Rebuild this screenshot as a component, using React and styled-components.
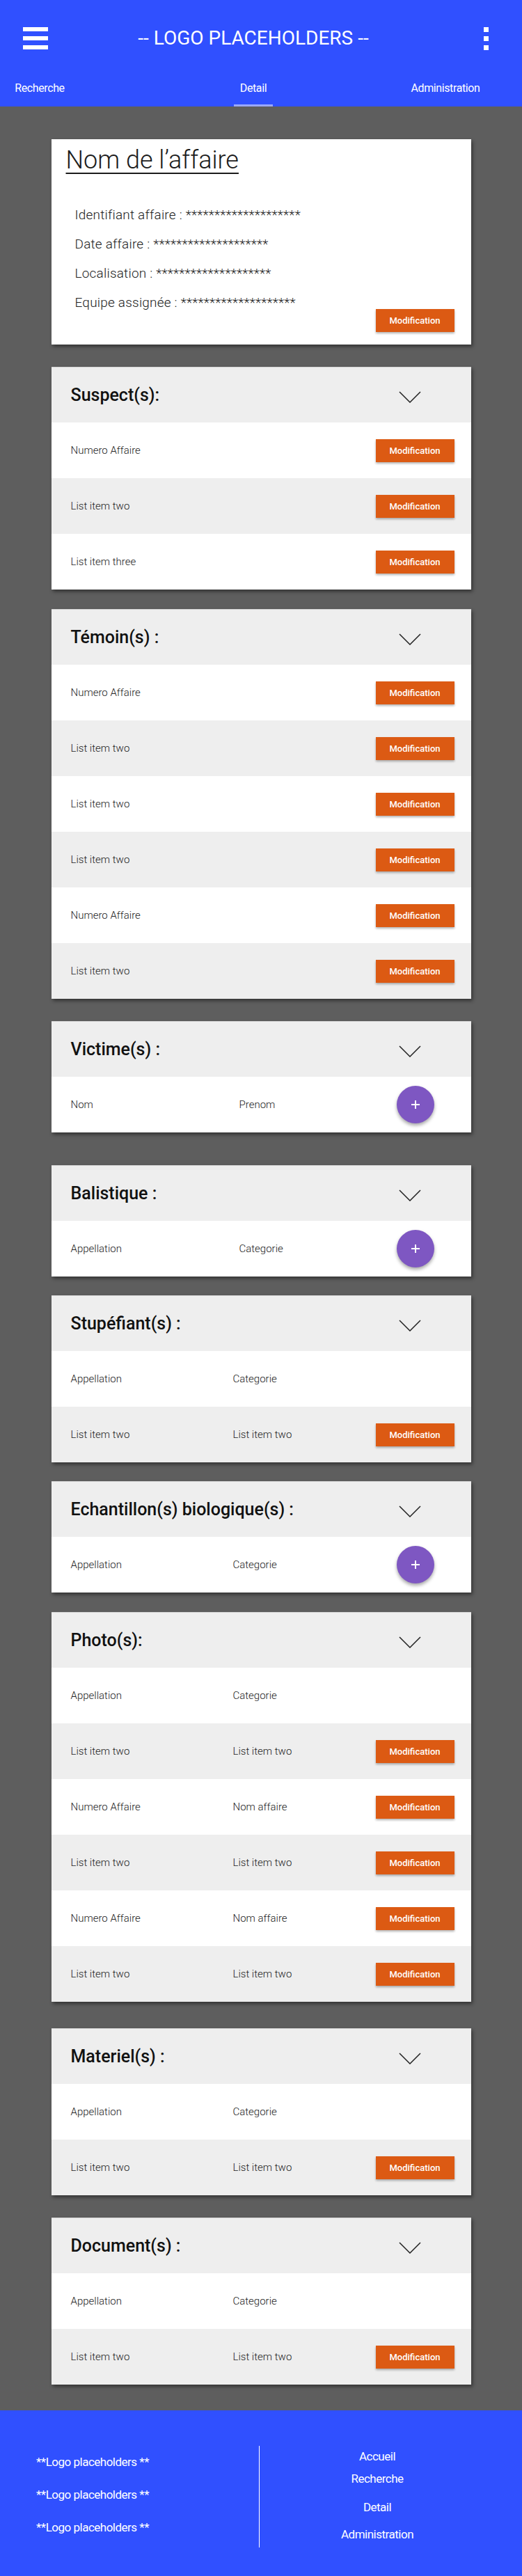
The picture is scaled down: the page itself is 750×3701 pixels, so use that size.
import React from "react";
import styled, { createGlobalStyle } from "styled-components";

const GlobalStyle = createGlobalStyle`
  * { box-sizing: border-box; }
  body {
    margin: 0;
    background: #5e5e5e;
    font-family: Roboto, "Noto Sans", sans-serif;
    color: #222;
  }
`;

const sections = [
  {
    title: "Suspect(s):",
    gap: 32,
    rows: [
      { a: "Numero Affaire", action: "btn" },
      { a: "List item two", action: "btn" },
      { a: "List item three", action: "btn" },
    ],
  },
  {
    title: "Témoin(s) :",
    gap: 28,
    rows: [
      { a: "Numero Affaire", action: "btn" },
      { a: "List item two", action: "btn" },
      { a: "List item two", action: "btn" },
      { a: "List item two", action: "btn" },
      { a: "Numero Affaire", action: "btn" },
      { a: "List item two", action: "btn" },
    ],
  },
  {
    title: "Victime(s) :",
    gap: 32,
    split: 242,
    rows: [{ a: "Nom", b: "Prenom", action: "fab" }],
  },
  {
    title: "Balistique :",
    gap: 47,
    split: 242,
    rows: [{ a: "Appellation", b: "Categorie", action: "fab" }],
  },
  {
    title: "Stupéfiant(s) :",
    gap: 27,
    rows: [
      { a: "Appellation", b: "Categorie" },
      { a: "List item two", b: "List item two", action: "btn" },
    ],
  },
  {
    title: "Echantillon(s) biologique(s) :",
    gap: 27,
    rows: [{ a: "Appellation", b: "Categorie", action: "fab" }],
  },
  {
    title: "Photo(s):",
    gap: 28,
    rows: [
      { a: "Appellation", b: "Categorie" },
      { a: "List item two", b: "List item two", action: "btn" },
      { a: "Numero Affaire", b: "Nom affaire", action: "btn" },
      { a: "List item two", b: "List item two", action: "btn" },
      { a: "Numero Affaire", b: "Nom affaire", action: "btn" },
      { a: "List item two", b: "List item two", action: "btn" },
    ],
  },
  {
    title: "Materiel(s) :",
    gap: 38,
    rows: [
      { a: "Appellation", b: "Categorie" },
      { a: "List item two", b: "List item two", action: "btn" },
    ],
  },
  {
    title: "Document(s) :",
    gap: 32,
    rows: [
      { a: "Appellation", b: "Categorie" },
      { a: "List item two", b: "List item two", action: "btn" },
    ],
  },
];

function Chevron() {
  return (
    <svg width="32" height="17" viewBox="0 0 32 17">
      <polyline points="1,1 16,16 31,1" fill="none" stroke="#222" strokeWidth="1.5" />
    </svg>
  );
}

function Section({ data }) {
  return (
    <Card $gap={data.gap}>
      <SectionHeader>
        <SectionTitle>{data.title}</SectionTitle>
        <ChevronBox>
          <Chevron />
        </ChevronBox>
      </SectionHeader>
      {data.rows.map((row, i) => (
        <Row key={i} $split={data.split || 233}>
          <Cell>{row.a}</Cell>
          <Cell>{row.b}</Cell>
          {row.action === "btn" && <ModButton>Modification</ModButton>}
          {row.action === "fab" && (
            <Fab>
              <svg width="16" height="16" viewBox="0 0 16 16">
                <path d="M8 2v12M2 8h12" stroke="#fff" strokeWidth="2" />
              </svg>
            </Fab>
          )}
        </Row>
      ))}
    </Card>
  );
}

export default function App() {
  return (
    <Page>
      <GlobalStyle />
      <Header>
        <Toolbar>
          <Burger>
            <span />
            <span />
            <span />
          </Burger>
          <Logo>-- LOGO PLACEHOLDERS --</Logo>
          <Kebab>
            <span />
            <span />
            <span />
          </Kebab>
        </Toolbar>
        <TabBar>
          <Tab $w={114}>Recherche</Tab>
          <Tab $w={100} $ml={200} $active>
            Detail
          </Tab>
          <Tab $w={200} $ml={126}>
            Administration
          </Tab>
        </TabBar>
      </Header>

      <InfoCard $gap={47}>
        <CaseTitle>Nom de l’affaire</CaseTitle>
        <InfoBody>
          <InfoList>
            <InfoLine>Identifiant affaire : ********************</InfoLine>
            <InfoLine>Date affaire : ********************</InfoLine>
            <InfoLine>Localisation : ********************</InfoLine>
            <InfoLine>Equipe assignée : ********************</InfoLine>
          </InfoList>
          <ModButton>Modification</ModButton>
        </InfoBody>
      </InfoCard>

      {sections.map((s) => (
        <Section key={s.title} data={s} />
      ))}

      <Footer>
        <FooterLogos>
          <FooterText>**Logo placeholders **</FooterText>
          <FooterText>**Logo placeholders **</FooterText>
          <FooterText>**Logo placeholders **</FooterText>
        </FooterLogos>
        <FooterLinks>
          <FooterText $mt={5}>Accueil</FooterText>
          <FooterText $mt={12}>Recherche</FooterText>
          <FooterText $mt={21}>Detail</FooterText>
          <FooterText $mt={19}>Administration</FooterText>
        </FooterLinks>
      </Footer>
    </Page>
  );
}

const Page = styled.div`
  width: 750px;
  display: flex;
  flex-direction: column;
`;

const Header = styled.header`
  background: #3050ff;
  height: 153px;
  color: #fff;
  display: flex;
  flex-direction: column;
`;

const Toolbar = styled.div`
  height: 110px;
  display: flex;
  align-items: center;
  padding: 0 48px 0 33px;
`;

const Burger = styled.div`
  width: 36px;
  display: flex;
  flex-direction: column;
  gap: 7px;
  span {
    display: block;
    height: 6px;
    background: #fff;
  }
`;

const Logo = styled.div`
  flex: 1;
  text-align: center;
  padding-right: 36px;
  font-size: 28px;
  letter-spacing: 0;
  line-height: 32px;
`;

const Kebab = styled.div`
  width: 7px;
  display: flex;
  flex-direction: column;
  gap: 6px;
  span {
    display: block;
    height: 7px;
    background: #fff;
  }
`;

const TabBar = styled.nav`
  height: 43px;
  display: flex;
`;

const Tab = styled.div`
  position: relative;
  width: ${(p) => p.$w}px;
  margin-left: ${(p) => p.$ml || 0}px;
  padding-top: 7px;
  text-align: center;
  font-size: 16px;
  line-height: 20px;
  letter-spacing: -0.4px;
  &::after {
    content: "";
    display: ${(p) => (p.$active ? "block" : "none")};
    position: absolute;
    bottom: 0;
    left: 50%;
    width: 56px;
    margin-left: -28px;
    height: 3px;
    background: #9aa8ff;
  }
`;

const Card = styled.section`
  width: 603px;
  margin: ${(p) => p.$gap}px auto 0;
  background: #fff;
  box-shadow: 2px 3px 5px rgba(0, 0, 0, 0.45);
`;

const InfoCard = styled(Card)`
  padding: 10px 24px 18px 21px;
`;

const CaseTitle = styled.h1`
  margin: 0;
  font-size: 36px;
  font-weight: 300;
  line-height: 40px;
  color: #1c1c1c;
  text-decoration: underline;
  text-decoration-thickness: 1.5px;
  text-underline-offset: 6px;
`;

const InfoBody = styled.div`
  margin-top: 38px;
  display: grid;
  grid-template-columns: 1fr auto;
  align-items: end;
`;

const InfoList = styled.div`
  padding: 0 0 21px 13px;
  display: flex;
  flex-direction: column;
`;

const InfoLine = styled.div`
  font-size: 19px;
  font-weight: 300;
  line-height: 42px;
  letter-spacing: 0.2px;
  color: #222;
`;

const ModButton = styled.button`
  justify-self: end;
  width: 113px;
  height: 33px;
  border: none;
  border-radius: 0;
  background: #dc5a13;
  color: #fff;
  font-family: Roboto, sans-serif;
  font-size: 13px;
  font-weight: 500;
  box-shadow: 0 2px 3px rgba(0, 0, 0, 0.3);
  padding: 0;
`;

const SectionHeader = styled.div`
  height: 80px;
  background: #eeeeee;
  border-top: 1px solid #d4d4d4;
  display: flex;
  align-items: center;
  justify-content: space-between;
  padding: 0 72px 0 28px;
`;

const SectionTitle = styled.h2`
  margin: 0;
  font-size: 25px;
  font-weight: 500;
  color: #111;
`;

const ChevronBox = styled.div`
  display: flex;
  margin-top: 6px;
`;

const Row = styled.div`
  height: 80px;
  display: grid;
  grid-template-columns: ${(p) => p.$split}px 1fr auto;
  align-items: center;
  padding: 0 24px 0 28px;
  background: #fff;
  &:nth-child(odd) {
    background: #eeeeee;
  }
`;

const Cell = styled.div`
  font-size: 15px;
  font-weight: 300;
  color: #222;
`;

const Fab = styled.button`
  width: 54px;
  height: 54px;
  margin-right: 29px;
  border: none;
  border-radius: 50%;
  background: #7e57c2;
  display: flex;
  align-items: center;
  justify-content: center;
  box-shadow: 0 3px 5px rgba(0, 0, 0, 0.35);
  padding: 0;
`;

const Footer = styled.footer`
  margin-top: 37px;
  height: 238px;
  background: #3050ff;
  color: #fff;
  display: grid;
  grid-template-columns: 373px 338px;
  padding: 51px 0 41px;
`;

const FooterLogos = styled.div`
  border-right: 1px solid #fff;
  padding: 13px 0 0 52px;
  display: flex;
  flex-direction: column;
  gap: 27px;
`;

const FooterLinks = styled.div`
  display: flex;
  flex-direction: column;
  align-items: center;
`;

const FooterText = styled.div`
  margin-top: ${(p) => p.$mt || 0}px;
  font-size: 17px;
  line-height: 20px;
  letter-spacing: -0.5px;
`;
